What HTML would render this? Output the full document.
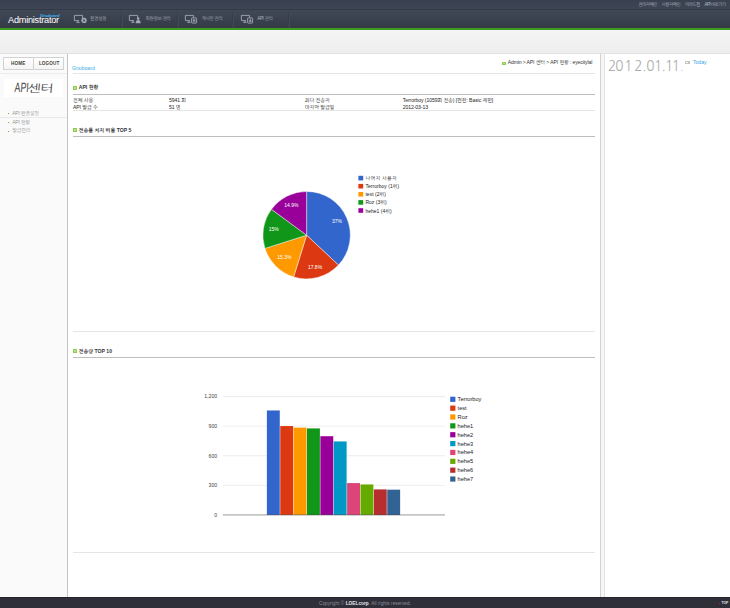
<!DOCTYPE html>
<html lang="ko">
<head>
<meta charset="utf-8">
<title>Administrator - API 현황</title>
<style>
*{margin:0;padding:0;box-sizing:border-box;}
html,body{width:730px;height:608px;overflow:hidden;}
body{position:relative;background:#f2f2f2;font-family:"Liberation Sans","NanumGothic","Noto Sans CJK KR",sans-serif;font-size:5.2px;color:#333;line-height:1;}
a{text-decoration:none;color:inherit;}
.abs{position:absolute;}
/* header */
#head{position:absolute;left:0;top:0;width:730px;height:28.2px;background:linear-gradient(#404856 0,#404856 9.6px,#3d4452 15px,#343b47 28px);}
#headtop{position:absolute;left:0;top:0;width:730px;height:9.6px;background:linear-gradient(#394150,#3e4654);border-bottom:0.6px solid #333945;}
#green{position:absolute;left:0;top:28px;width:730px;height:2.2px;background:#3d9b1f;}
#toplinks{position:absolute;top:3.1px;right:4.3px;font-size:4.5px;color:#b3b8c2;white-space:nowrap;letter-spacing:-0.53px;}
#toplinks a{margin-left:4.8px;}
#logo{position:absolute;left:8px;top:16.3px;font-size:9.2px;color:#fff;letter-spacing:-0.25px;}
#logosub{position:absolute;left:39.9px;top:13.6px;font-size:4.3px;color:#3db4f5;font-style:italic;font-weight:bold;letter-spacing:-0.1px;}
.nav{position:absolute;top:11.5px;height:16.5px;width:55.6px;border-left:0.5px solid #373d49;}
.nav:before{content:"";position:absolute;left:0;top:0;width:0.5px;height:100%;background:#424956;}
.nav.first{border-left-color:transparent;}.nav.first:before{display:none;}
.nav span{position:absolute;top:5.8px;font-size:4.6px;color:#adb2bc;white-space:nowrap;letter-spacing:-0.35px;}
.nav svg{position:absolute;top:3.2px;width:13px;height:9px;overflow:visible;}
/* sub band */
#band{position:absolute;left:0;top:30.2px;width:730px;height:23.5px;background:linear-gradient(#f4f4f4,#eeeeee);border-bottom:0.6px solid #e2e2e2;}
/* sidebar */
#side{position:absolute;left:0;top:53.5px;width:67.6px;height:544px;background:#fafafa;border-right:0.7px solid #c4c4c4;}
#btns{position:absolute;left:3.3px;top:3.7px;width:60.6px;height:12.4px;border:0.6px solid #d2d2d2;background:linear-gradient(#fff,#f5f5f5);}
#btns b{position:absolute;top:3.7px;font-size:4.6px;color:#3d4437;letter-spacing:0.15px;}
#btns i{position:absolute;left:29px;top:0;width:0.6px;height:100%;background:#d2d2d2;}
#sideline1{position:absolute;left:0;top:19.6px;width:67px;height:0.5px;background:#ececec;}
#apilogo{position:absolute;left:4px;top:25.6px;width:59.4px;height:18px;background:#fff;}
#apilogo span{position:absolute;white-space:nowrap;color:#454545;transform-origin:0 0;font-family:"Liberation Sans","NanumGothic",sans-serif;}
#apilogo .a1{left:10.6px;top:2px;font-size:13.4px;transform:scaleX(0.66) skewX(-6deg);}
#apilogo .a2{left:24.2px;top:4.6px;font-size:10.4px;transform:scaleX(1.36) skewX(-4deg);letter-spacing:-0.4px;}
.menu{position:absolute;left:12.2px;font-size:5.1px;color:#9a9a9a;white-space:nowrap;letter-spacing:-0.28px;}
.menu:before{content:"";position:absolute;left:-4.6px;top:2.6px;width:0.9px;height:0.9px;background:#7aa85a;}
#sideline2{position:absolute;left:0;top:63.6px;width:67px;height:0.5px;background:#e9e9e9;}
/* main */
#main{position:absolute;left:68.2px;top:53.5px;width:532.5px;height:544px;background:#fff;border-right:0.6px solid #d2d2d2;}
#rgap{position:absolute;left:600.8px;top:53.5px;width:3px;height:544px;background:#f6f6f6;}
#right{position:absolute;left:603.7px;top:53.5px;width:127px;height:544px;background:#fff;border-left:0.6px solid #e4e4e4;}
.hl{position:absolute;left:4.8px;width:522px;height:0.6px;background:#e5e5e5;}
.thick{position:absolute;left:4.8px;width:522px;height:1.6px;background:#747474;border-bottom:0.5px solid #bdbdbd;}
.h{position:absolute;left:10.5px;font-size:5.1px;font-weight:bold;color:#333;white-space:nowrap;letter-spacing:0.02px;}
.h:before{content:"";position:absolute;left:-5.3px;top:0.6px;width:1.8px;height:1.8px;background:#b4e384;border:0.5px solid #8fcb52;border-radius:0.5px;}
.t{position:absolute;font-size:5.1px;color:#1c1c1c;white-space:nowrap;letter-spacing:-0.09px;}
#gnu{position:absolute;left:3.9px;top:12.2px;font-size:5.1px;color:#3aa7e8;letter-spacing:0;}
#crumb{position:absolute;right:7.5px;top:6.6px;font-size:5px;color:#333;white-space:nowrap;letter-spacing:-0.09px;}
#crumb:before{content:"";position:absolute;left:-5.6px;top:1.5px;width:1.6px;height:1.6px;background:#b4e384;border:0.5px solid #8fcb52;border-radius:0.5px;}
/* right panel */
#date{position:absolute;left:0;top:0;}
#date span{position:absolute;top:2.6px;width:10px;margin-left:-5px;text-align:center;font-family:"NanumGothic","Liberation Sans",sans-serif;font-weight:400;font-size:13.6px;color:#adadad;line-height:20px;}
#today{position:absolute;left:88.2px;top:6.2px;font-size:5.2px;color:#3aa7e8;}
#cal{position:absolute;left:80px;top:7.8px;width:5.4px;height:3.2px;border:0.5px solid #c4c4c4;}
#cal:before{content:"";position:absolute;left:2px;top:0;width:0.4px;height:100%;background:#bbb;}
/* footer */
#foot{position:absolute;left:0;top:597px;width:730px;height:11px;background:#2f2f3a;border-top:0.6px solid #24242d;}
#copy{position:absolute;left:0;width:730px;top:4.2px;text-align:center;font-size:4.7px;color:#8e8e98;letter-spacing:0.05px;}
#copy b{color:#e8e8ee;}
#top{position:absolute;right:1.8px;top:3.9px;font-size:3.3px;font-weight:bold;color:#e8e8e8;}
#top:before{content:"";position:absolute;left:-2.3px;top:1.1px;width:1.2px;height:1.2px;border-radius:50%;background:#e02020;}
svg text{font-family:"Liberation Sans","NanumGothic","Noto Sans CJK KR",sans-serif;}
</style>
</head>
<body>
<div id="head">
  <div id="headtop"></div>
  <div id="toplinks"><a>관리자메인</a><a>사용자메인</a><a>이라드컴</a><a>API 바로가기</a></div>
  <div id="logo">Administrator</div>
  <div id="logosub">Gnuboard</div>

  <div class="nav first" style="left:65.6px">
    <svg style="left:7.3px" viewBox="0 0 13 9"><path d="M0.4 0.4h8.2v4.3M5 5.6H0.4V0.4M2.3 7.4h3.4M3.9 5.6v1.8" fill="none" stroke="#a3a9b3" stroke-width="0.9"/><circle cx="10" cy="5.4" r="1.9" fill="none" stroke="#a3a9b3" stroke-width="1.3"/><path d="M10 2.6v5.6M7.2 5.4h5.6M8 3.4l4 4M12 3.4l-4 4" stroke="#a3a9b3" stroke-width="0.8"/><circle cx="10" cy="5.4" r="0.8" fill="#3a414e"/></svg>
    <span style="left:23.4px">환경설정</span>
  </div>
  <div class="nav" style="left:121.2px">
    <svg style="left:7.2px" viewBox="0 0 13 9"><path d="M0.4 0.4h8.2v3M5 5.6H0.4V0.4M2.3 7.4h3.2M3.9 5.6v1.8" fill="none" stroke="#a3a9b3" stroke-width="0.9"/><circle cx="9.2" cy="3.6" r="1.3" fill="#a3a9b3"/><path d="M6.7 8.2c0-2.2 1-3.2 2.5-3.2s2.5 1 2.5 3.2z" fill="#a3a9b3"/></svg>
    <span style="left:23.4px">회원정보 관리</span>
  </div>
  <div class="nav" style="left:176.8px">
    <svg style="left:7.4px" viewBox="0 0 13 9"><path d="M0.4 0.4h8.2v2.4M5 5.6H0.4V0.4M2.3 7.4h3.2M3.9 5.6v1.8" fill="none" stroke="#a3a9b3" stroke-width="0.9"/><rect x="6.6" y="2.9" width="5" height="5.2" rx="0.5" fill="#3a414e" stroke="#a3a9b3" stroke-width="0.9"/><text x="9.1" y="7" font-size="3.9" font-weight="bold" fill="#a3a9b3" text-anchor="middle">B</text></svg>
    <span style="left:23.6px">게시판 관리</span>
  </div>
  <div class="nav" style="left:232.4px">
    <svg style="left:7.3px" viewBox="0 0 13 9"><path d="M0.4 0.4h8.2v2.4M5 5.6H0.4V0.4M2.3 7.4h3.2M3.9 5.6v1.8" fill="none" stroke="#a3a9b3" stroke-width="0.9"/><rect x="6.6" y="2.9" width="5" height="5.2" rx="0.5" fill="#3a414e" stroke="#a3a9b3" stroke-width="0.9"/><text x="9.1" y="7" font-size="3.9" font-weight="bold" fill="#a3a9b3" text-anchor="middle">A</text></svg>
    <span style="left:23.8px">API 관리</span>
  </div>
  <div class="nav" style="left:288px;width:1px"></div>
</div>
<div id="green"></div>
<div id="band"></div>

<div id="side">
  <div id="btns"><b style="left:6.8px">HOME</b><i></i><b style="left:34.6px">LOGOUT</b></div>
  <div id="sideline1"></div>
  <div id="apilogo"><span class="a1">API</span><span class="a2">센터</span></div>
  <div class="menu" style="top:57.2px">API 환경설정</div>
  <div id="sideline2"></div>
  <div class="menu" style="top:66.4px">API 현황</div>
  <div class="menu" style="top:74.6px">발급관리</div>
</div>

<div id="main">
  <div id="crumb">Admin &gt; API 센터 &gt; API 현황 : eyecitylal</div>
  <div id="gnu">Gnuboard</div>
  <div class="hl" style="top:19.5px"></div>

  <div class="h" style="top:31.8px">API 현황</div>
  <div class="thick" style="top:40.1px"></div>
  <div class="t" style="left:4.8px;top:44.4px">전체 사용</div>
  <div class="t" style="left:100.8px;top:44.4px">5941 회</div>
  <div class="t" style="left:236.6px;top:44.4px">최다 전송자</div>
  <div class="t" style="left:334.6px;top:44.4px">Terrorboy (1059회 전송) [권한: Basic 제한]</div>
  <div class="t" style="left:4.8px;top:51.2px">API 발급 수</div>
  <div class="t" style="left:100.8px;top:51.2px">51 명</div>
  <div class="t" style="left:236.6px;top:51.2px">마지막 발급일</div>
  <div class="t" style="left:334.6px;top:51.2px">2012-03-13</div>
  <div class="hl" style="top:56.2px"></div>

  <div class="h" style="top:74.0px">전송률 차지 비율 TOP 5</div>
  <div class="thick" style="top:82.4px"></div>

  <svg class="abs" style="left:160px;top:100px" width="260" height="150" viewBox="228.2 153.5 260 150">
    <g stroke="#fff" stroke-width="0.45" stroke-linejoin="round" id="pie"><path d="M306.8 234.65L306.80 190.95A43.7 43.7 0 0 1 338.66 264.56Z" fill="#3366cc"/><path d="M306.8 234.65L338.66 264.56A43.7 43.7 0 0 1 293.82 276.38Z" fill="#dc3912"/><path d="M306.8 234.65L293.82 276.38A43.7 43.7 0 0 1 265.15 247.89Z" fill="#ff9900"/><path d="M306.8 234.65L265.15 247.89A43.7 43.7 0 0 1 271.61 208.74Z" fill="#109618"/><path d="M306.8 234.65L271.61 208.74A43.7 43.7 0 0 1 306.80 190.95Z" fill="#990099"/></g>
    <g font-size="5" fill="#fff" text-anchor="middle">
      <text x="337.2" y="222.5">37%</text>
      <text x="315.2" y="268.7">17.8%</text>
      <text x="284.5" y="258.5">15.3%</text>
      <text x="274" y="230.7">15%</text>
      <text x="291.6" y="206.5">14.9%</text>
    </g>
    <g>
      <rect x="358.6" y="175.3" width="4.8" height="4.6" fill="#3366cc"/>
      <rect x="358.6" y="183.4" width="4.8" height="4.6" fill="#dc3912"/>
      <rect x="358.6" y="191.5" width="4.8" height="4.6" fill="#ff9900"/>
      <rect x="358.6" y="199.6" width="4.8" height="4.6" fill="#109618"/>
      <rect x="358.6" y="207.7" width="4.8" height="4.6" fill="#990099"/>
    </g>
    <g font-size="4.95" fill="#222" letter-spacing="0.06">
      <text x="365.6" y="179.5" letter-spacing="0.35">나머지 사용자</text>
      <text x="365.6" y="187.7">Terrorboy (1위)</text>
      <text x="365.6" y="195.8">test (2위)</text>
      <text x="365.6" y="203.9">Roz (3위)</text>
      <text x="365.6" y="212">hehe1 (4위)</text>
    </g>
  </svg>

  <div class="hl" style="top:277.8px"></div>
  <div class="h" style="top:295.0px">전송량 TOP 10</div>
  <div class="thick" style="top:303.4px"></div>

  <svg class="abs" style="left:110px;top:330px" width="330" height="150" viewBox="178.2 383.5 330 150">
    <g stroke="#dadada" stroke-width="0.5">
      <line x1="223.1" x2="445.2" y1="396.05" y2="396.05"/>
      <line x1="223.1" x2="445.2" y1="425.65" y2="425.65"/>
      <line x1="223.1" x2="445.2" y1="455.25" y2="455.25"/>
      <line x1="223.1" x2="445.2" y1="484.85" y2="484.85"/>
    </g>
    <g id="bars"><rect x="267.07" y="409.96" width="12.9" height="104.49" fill="#3366cc"/><rect x="280.44" y="425.55" width="12.9" height="88.90" fill="#dc3912"/><rect x="293.82" y="427.13" width="12.9" height="87.32" fill="#ff9900"/><rect x="307.19" y="427.92" width="12.9" height="86.53" fill="#109618"/><rect x="320.56" y="435.71" width="12.9" height="78.74" fill="#990099"/><rect x="333.93" y="440.94" width="12.9" height="73.51" fill="#0099c6"/><rect x="347.31" y="482.58" width="12.9" height="31.87" fill="#dd4477"/><rect x="360.68" y="483.96" width="12.9" height="30.49" fill="#66aa00"/><rect x="374.05" y="488.90" width="12.9" height="25.55" fill="#b82e2e"/><rect x="387.43" y="489.19" width="12.9" height="25.26" fill="#316395"/></g>
    <line x1="223.1" x2="445.2" y1="514.45" y2="514.45" stroke="#333" stroke-width="0.5"/>
    <g font-size="5.2" fill="#444" text-anchor="end">
      <text x="217.4" y="397.9">1,200</text>
      <text x="217.4" y="427.5">900</text>
      <text x="217.4" y="457.1">600</text>
      <text x="217.4" y="486.7">300</text>
      <text x="217.4" y="516.3">0</text>
    </g>
    <g id="blegend" font-size="5.64" fill="#222">
      <rect x="450.4" y="396.2" width="5.2" height="5.2" fill="#3366cc"/><text x="457.8" y="400.7">Terrorboy</text>
      <rect x="450.4" y="405.06" width="5.2" height="5.2" fill="#dc3912"/><text x="457.8" y="409.56">test</text>
      <rect x="450.4" y="413.92" width="5.2" height="5.2" fill="#ff9900"/><text x="457.8" y="418.42">Roz</text>
      <rect x="450.4" y="422.78" width="5.2" height="5.2" fill="#109618"/><text x="457.8" y="427.28">hehe1</text>
      <rect x="450.4" y="431.64" width="5.2" height="5.2" fill="#990099"/><text x="457.8" y="436.14">hehe2</text>
      <rect x="450.4" y="440.5" width="5.2" height="5.2" fill="#0099c6"/><text x="457.8" y="445">hehe3</text>
      <rect x="450.4" y="449.36" width="5.2" height="5.2" fill="#dd4477"/><text x="457.8" y="453.86">hehe4</text>
      <rect x="450.4" y="458.22" width="5.2" height="5.2" fill="#66aa00"/><text x="457.8" y="462.72">hehe5</text>
      <rect x="450.4" y="467.08" width="5.2" height="5.2" fill="#b82e2e"/><text x="457.8" y="471.58">hehe6</text>
      <rect x="450.4" y="475.94" width="5.2" height="5.2" fill="#316395"/><text x="457.8" y="480.44">hehe7</text>
    </g>
  </svg>

  <div class="hl" style="top:498.6px"></div>
</div>
<div id="rgap"></div>
<div id="right">
  <div id="date"><span style="left:7.4px">2</span><span style="left:14.6px">0</span><span style="left:23.8px">1</span><span style="left:33.7px">2</span><span style="left:39.6px">.</span><span style="left:45.7px">0</span><span style="left:53.4px">1</span><span style="left:58.8px">.</span><span style="left:64.4px">1</span><span style="left:71.2px">1</span><span style="left:77.4px;color:#d2d2d2">.</span></div>
  <div id="cal"></div>
  <div id="today">Today</div>
</div>

<div id="foot">
  <div id="copy">Copyright © <b>LOELcorp</b>. All rights reserved.</div>
  <div id="top">TOP</div>
</div>
</body>
</html>
